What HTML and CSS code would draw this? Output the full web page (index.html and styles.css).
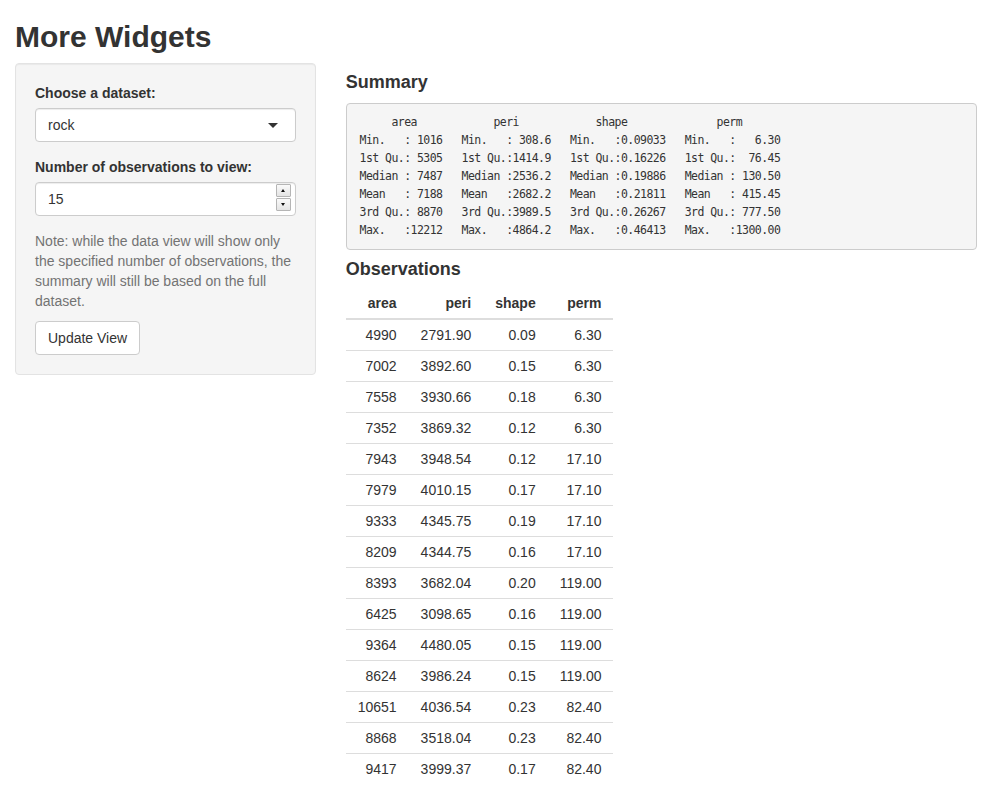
FILE: index.html
```html
<!DOCTYPE html>
<html>
<head>
<meta charset="utf-8">
<title>More Widgets</title>
<link rel="stylesheet" href="styles.css">
</head>
<body>
<div class="container">
  <h2 class="title">More Widgets</h2>
  <div class="row">
    <div class="sidebar">
      <form class="well">
        <div class="form-group">
          <label class="control-label">Choose a dataset:</label>
          <div class="select-box"><span>rock</span><span class="caret"></span></div>
        </div>
        <div class="form-group">
          <label class="control-label">Number of observations to view:</label>
          <div class="number-wrap">
            <div class="number-input">15</div>
            <div class="spinner">
              <span class="spin-btn"><span class="tri-up"></span></span>
              <span class="spin-btn"><span class="tri-down"></span></span>
            </div>
          </div>
        </div>
        <span class="help-block">Note: while the data view will show only the specified number of observations, the summary will still be based on the full dataset.</span>
        <button type="button" class="btn">Update View</button>
      </form>
    </div>
    <div class="main">
      <h4 class="section">Summary</h4>
<pre class="summary">      area            peri            shape              perm        
 Min.   : 1016   Min.   : 308.6   Min.   :0.09033   Min.   :   6.30  
 1st Qu.: 5305   1st Qu.:1414.9   1st Qu.:0.16226   1st Qu.:  76.45  
 Median : 7487   Median :2536.2   Median :0.19886   Median : 130.50  
 Mean   : 7188   Mean   :2682.2   Mean   :0.21811   Mean   : 415.45  
 3rd Qu.: 8870   3rd Qu.:3989.5   3rd Qu.:0.26267   3rd Qu.: 777.50  
 Max.   :12212   Max.   :4864.2   Max.   :0.46413   Max.   :1300.00  </pre>
      <h4 class="section section-obs">Observations</h4>
      <table class="data-table">
        <thead>
          <tr><th>area</th><th>peri</th><th>shape</th><th>perm</th></tr>
        </thead>
        <tbody>
          <tr><td>4990</td><td>2791.90</td><td>0.09</td><td>6.30</td></tr>
          <tr><td>7002</td><td>3892.60</td><td>0.15</td><td>6.30</td></tr>
          <tr><td>7558</td><td>3930.66</td><td>0.18</td><td>6.30</td></tr>
          <tr><td>7352</td><td>3869.32</td><td>0.12</td><td>6.30</td></tr>
          <tr><td>7943</td><td>3948.54</td><td>0.12</td><td>17.10</td></tr>
          <tr><td>7979</td><td>4010.15</td><td>0.17</td><td>17.10</td></tr>
          <tr><td>9333</td><td>4345.75</td><td>0.19</td><td>17.10</td></tr>
          <tr><td>8209</td><td>4344.75</td><td>0.16</td><td>17.10</td></tr>
          <tr><td>8393</td><td>3682.04</td><td>0.20</td><td>119.00</td></tr>
          <tr><td>6425</td><td>3098.65</td><td>0.16</td><td>119.00</td></tr>
          <tr><td>9364</td><td>4480.05</td><td>0.15</td><td>119.00</td></tr>
          <tr><td>8624</td><td>3986.24</td><td>0.15</td><td>119.00</td></tr>
          <tr><td>10651</td><td>4036.54</td><td>0.23</td><td>82.40</td></tr>
          <tr><td>8868</td><td>3518.04</td><td>0.23</td><td>82.40</td></tr>
          <tr><td>9417</td><td>3999.37</td><td>0.17</td><td>82.40</td></tr>
        </tbody>
      </table>
    </div>
  </div>
</div>
</body>
</html>
```
FILE: styles.css
```css
* { box-sizing: border-box; }
html, body {
  margin: 0;
  padding: 0;
}
body {
  font-family: "Liberation Sans", Arial, sans-serif;
  font-size: 14px;
  line-height: 20px;
  color: #333;
  background: #fff;
}
.container {
  padding: 0 15px;
}
.title {
  margin: 20px 0 10px;
  font-size: 30px;
  line-height: 33px;
  font-weight: 700;
}
.row {
  display: flex;
  margin: 0 -15px;
}
.sidebar {
  width: 33.3333%;
  padding: 0 15px;
}
.main {
  width: 66.6667%;
  padding: 0 15px;
}
.well {
  display: block;
  margin: 0 0 20px;
  padding: 19px;
  background: #f5f5f5;
  border: 1px solid #e3e3e3;
  border-radius: 4px;
  box-shadow: inset 0 1px 1px rgba(0,0,0,.05);
}
.form-group {
  margin-bottom: 15px;
}
.control-label {
  display: block;
  font-weight: 700;
  margin-bottom: 5px;
}
.select-box {
  position: relative;
  height: 34px;
  padding: 6px 12px;
  background: #fff;
  border: 1px solid #ccc;
  border-radius: 4px;
  box-shadow: inset 0 1px 1px rgba(0,0,0,.075);
}
.caret {
  position: absolute;
  right: 17px;
  top: 14px;
  width: 0;
  height: 0;
  border-style: solid;
  border-width: 5px 5px 0 5px;
  border-color: #333 transparent transparent transparent;
}
.number-wrap {
  position: relative;
}
.number-input {
  height: 34px;
  padding: 6px 12px;
  background: #fff;
  border: 1px solid #ccc;
  border-radius: 4px;
  box-shadow: inset 0 1px 1px rgba(0,0,0,.075);
}
.spinner {
  position: absolute;
  right: 5px;
  top: 2px;
  width: 15px;
  display: flex;
  flex-direction: column;
  gap: 1px;
}
.spin-btn {
  display: flex;
  align-items: center;
  justify-content: center;
  height: 13px;
  background: linear-gradient(#fafafa, #e4e4e4);
  border: 1px solid #b5b5b5;
  border-radius: 1px;
}
.tri-up, .tri-down {
  width: 0;
  height: 0;
  border-style: solid;
}
.tri-up {
  border-width: 0 2.5px 3px 2.5px;
  border-color: transparent transparent #111 transparent;
}
.tri-down {
  border-width: 3px 2.5px 0 2.5px;
  border-color: #111 transparent transparent transparent;
}
.help-block {
  display: block;
  margin: 0 0 10px;
  color: #737373;
}
.btn {
  display: inline-block;
  height: 34px;
  padding: 6px 12px;
  font-family: inherit;
  font-size: 14px;
  line-height: 20px;
  color: #333;
  background: #fff;
  border: 1px solid #ccc;
  border-radius: 4px;
}
.section {
  margin: 10px 0 10px;
  font-size: 18px;
  line-height: 19.8px;
  font-weight: 700;
}
.section-obs {
  margin-bottom: 8px;
}
.summary {
  margin: 0 0 10px;
  padding: 9.5px 9.5px 9.5px 6.5px;
  font-family: "DejaVu Sans Mono", "Liberation Mono", monospace;
  font-size: 11.5px;
  letter-spacing: -0.548px;
  line-height: 18px;
  color: #333;
  background: #f5f5f5;
  border: 1px solid #ccc;
  border-radius: 4px;
  white-space: pre;
  overflow: hidden;
}
.data-table {
  border-collapse: collapse;
  border-spacing: 0;
  margin-bottom: 10px;
}
.data-table th,
.data-table td {
  padding: 5px 12px;
  text-align: right;
  line-height: 20px;
}
.data-table th {
  font-weight: 700;
  border-bottom: 2px solid #ddd;
}
.data-table td {
  border-top: 1px solid #ddd;
}
```
